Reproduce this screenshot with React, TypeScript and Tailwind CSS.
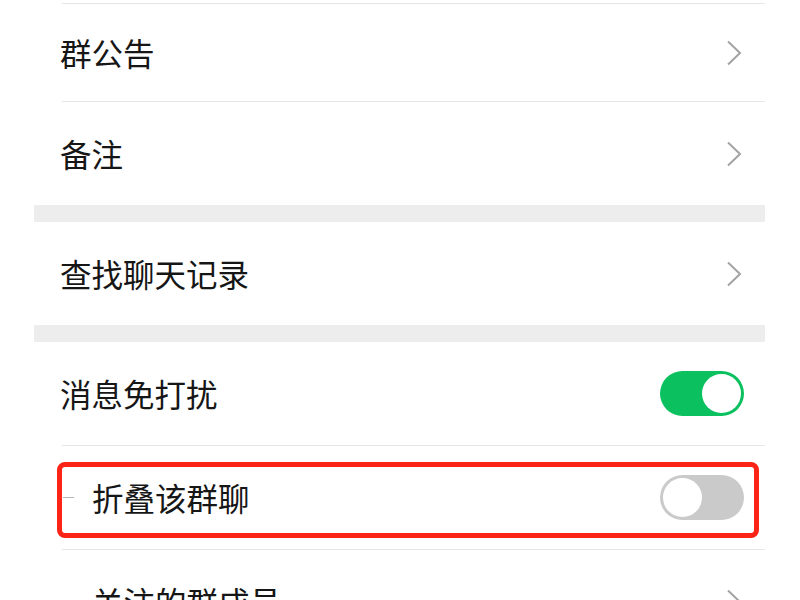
import React from 'react';

function Chevron() {
  return (
    <svg width="16" height="26" viewBox="0 0 16 26" className="shrink-0">
      <path d="M2 1.5 L14 13 L2 24.5" fill="none" stroke="#a3a3a3" strokeWidth="2" />
    </svg>
  );
}

function Toggle({ on }: { on: boolean }) {
  return (
    <div
      className={
        on
          ? 'mr-[-2px] w-[84px] h-[45px] rounded-full bg-[#0bc15f] p-[3px] flex justify-end items-center'
          : 'mr-[-2px] w-[84px] h-[45px] rounded-full bg-[#cacaca] p-[3px] flex justify-start items-center'
      }
    >
      <div className="w-[39px] h-[39px] rounded-full bg-white" />
    </div>
  );
}

function Row({
  label,
  height,
  indent,
  right,
}: {
  label: string;
  height: string;
  indent?: boolean;
  right: React.ReactNode;
}) {
  return (
    <div className={`${height} flex items-center justify-between bg-white pr-[23px]`}>
      {indent ? (
        <div className="flex items-center">
          <div className="ml-[29px] w-[11px] h-px bg-[#b5b5b5]" />
          <span className="ml-[18px]">{label}</span>
        </div>
      ) : (
        <span className="ml-[26px]">{label}</span>
      )}
      {right}
    </div>
  );
}

const Divider = () => <div className="ml-[28px] h-px bg-[#e6e6e6]" />;
const Band = () => <div className="h-[17px] bg-[#ededed]" />;

export default function App() {
  return (
    <div
      className="relative w-[800px] h-[600px] overflow-hidden bg-white text-[31.5px] leading-none text-[#161616]"
      style={{ fontFamily: '"Noto Sans CJK SC", "Noto Sans", sans-serif' }}
    >
      <div className="ml-[34px] w-[731px]">
        <div className="h-[3px]" />
        <Divider />
        <Row label="群公告" height="h-[97px]" right={<Chevron />} />
        <Divider />
        <Row label="备注" height="h-[103px]" right={<Chevron />} />
        <Band />
        <Row label="查找聊天记录" height="h-[103px]" right={<Chevron />} />
        <Band />
        <Row label="消息免打扰" height="h-[103px]" right={<Toggle on />} />
        <Divider />
        <Row label="折叠该群聊" height="h-[103px]" indent right={<Toggle on={false} />} />
        <Divider />
        <Row label="关注的群成员" height="h-[103px]" indent right={<Chevron />} />
      </div>

      {/* red highlight annotation */}
      <div className="absolute left-[57px] top-[462px] w-[702px] h-[76px] rounded-[8px] border-[5px] border-[#fc2317]" />
    </div>
  );
}
